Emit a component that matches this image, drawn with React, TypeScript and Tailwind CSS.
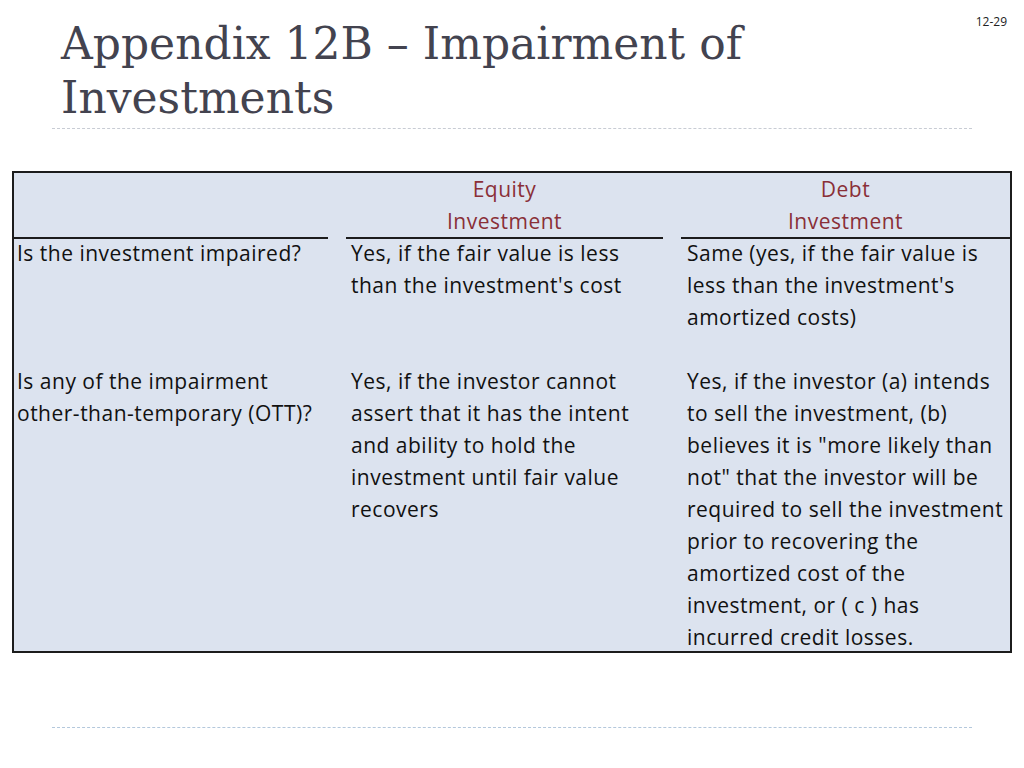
import React from 'react'

const body = "font-['Open_Sans','Lato',sans-serif]"

const rows = [
    {
        q: ['Is the investment impaired?'],
        equity: ['Yes, if the fair value is less', "than the investment's cost"],
        debt: ['Same (yes, if the fair value is', "less than the investment's", 'amortized costs)'],
        h: 'h-[128px]',
    },
    {
        q: ['Is any of the impairment', 'other-than-temporary (OTT)?'],
        equity: [
            'Yes, if the investor cannot',
            'assert that it has the intent',
            'and ability to hold the',
            'investment until fair value',
            'recovers',
        ],
        debt: [
            'Yes, if the investor (a) intends',
            'to sell the investment, (b)',
            'believes it is "more likely than',
            'not" that the investor will be',
            'required to sell the investment',
            'prior to recovering the',
            'amortized cost of the',
            'investment, or ( c ) has',
            'incurred credit losses.',
        ],
        h: 'h-[288px]',
    },
]

function Lines({ lines }: { lines: string[] }) {
    return (
        <>
            {lines.map((l) => (
                <div key={l} className="whitespace-nowrap">{l}</div>
            ))}
        </>
    )
}

export default function App() {
    return (
        <div className="w-[1024px] h-[768px] bg-white relative overflow-hidden">
            <div className={`absolute right-[17px] top-[13px] text-[12px] text-[#222] ${body}`}>12-29</div>

            <div className="pl-[61px] pt-[17px] pr-[40px]">
                <h1 className="font-['DejaVu_Serif',serif] text-[44px] leading-[54px] text-[#43434f] whitespace-nowrap">
                    Appendix 12B – Impairment of<br />Investments
                </h1>
            </div>
            <div className="mx-[52px] mt-[3px] border-t border-dashed border-[#c8ccd4] w-[920px]" />

            <div className={`mx-[12px] mt-[42px] w-[1000px] border-2 border-[#1c1c1c] bg-[#dce3ef] ${body} text-[21px] tracking-[0.5px] leading-[32px] text-[#111]`}>
                <div className="grid grid-cols-[323px_335px_338px] h-[62px]">
                    <div className="mr-[9px] border-b-2 border-[#1c1c1c]" />
                    <div className="mx-[9px] border-b-2 border-[#1c1c1c] text-center text-[#8a2f37]">
                        Equity<br />Investment
                    </div>
                    <div className="ml-[9px] border-b-2 border-[#1c1c1c] text-center text-[#8a2f37]">
                        Debt<br />Investment
                    </div>
                </div>
                {rows.map((r) => (
                    <div key={r.q[0]} className={`grid grid-cols-[323px_335px_338px] ${r.h}`}>
                        <div className="pl-[3px] pt-[2px]"><Lines lines={r.q} /></div>
                        <div className="pl-[14px] pt-[2px]"><Lines lines={r.equity} /></div>
                        <div className="pl-[15px] pt-[2px]"><Lines lines={r.debt} /></div>
                    </div>
                ))}
            </div>

            <div className="mx-[52px] mt-[74px] border-t border-dashed border-[#b4c8dc] w-[920px]" />
        </div>
    )
}
